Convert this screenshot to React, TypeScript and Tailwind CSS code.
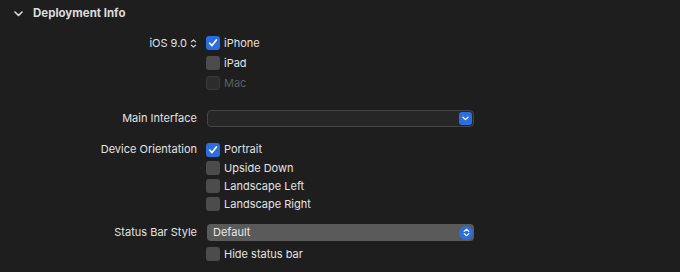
import React from "react";

const font = { fontFamily: "Inter, 'Liberation Sans', sans-serif" };

function Check({ checked, disabled }: { checked?: boolean; disabled?: boolean }) {
  if (checked) {
    return (
      <div className="w-[14px] h-[14px] rounded-[3px] bg-[#2b6ee0] flex items-center justify-center shrink-0">
        <svg width="10" height="10" viewBox="0 0 10 10">
          <path d="M1.8 5.2 L4 7.6 L8.4 1.9" fill="none" stroke="white" strokeWidth="1.7" strokeLinecap="round" strokeLinejoin="round" />
        </svg>
      </div>
    );
  }
  if (disabled) {
    return <div className="w-[14px] h-[14px] rounded-[3px] bg-[#2c2c2c] border border-[#3a3a3a] shrink-0" />;
  }
  return <div className="w-[14px] h-[14px] rounded-[3px] bg-[#4c4c4c] shrink-0" />;
}

function CheckRow({ label, checked, disabled, h }: { label: string; checked?: boolean; disabled?: boolean; h: string }) {
  return (
    <div className={`flex items-center gap-[4px] ${h}`}>
      <Check checked={checked} disabled={disabled} />
      <span className={disabled ? "text-[#5e5e5e]" : "text-[#e2e2e2]"}>{label}</span>
    </div>
  );
}

function Label({ children }: { children: React.ReactNode }) {
  return <div className="w-[197px] text-right text-[#e2e2e2] shrink-0">{children}</div>;
}

export default function App() {
  return (
    <div className="w-[680px] h-[272px] bg-[#1e1e1e] text-[11px] overflow-hidden" style={font}>
      <div className="flex items-center h-[27px] pl-[14px]">
        <svg width="9" height="6" viewBox="0 0 9 6" className="mr-[10px]">
          <path d="M1 1 L4.5 4.5 L8 1" fill="none" stroke="#dcdcdc" strokeWidth="1.6" strokeLinecap="round" strokeLinejoin="round" />
        </svg>
        <span className="font-bold text-[#dcdcdc] text-[11.5px]">Deployment Info</span>
      </div>

      <div className="flex mt-[6px]">
        <Label>
          <span className="inline-flex items-center h-[20px]">
            iOS 9.0
            <svg width="7" height="9" viewBox="0 0 7 9" className="ml-[3px]">
              <path d="M1 3.2 L3.5 1 L6 3.2 M1 5.8 L3.5 8 L6 5.8" fill="none" stroke="#dedede" strokeWidth="1.1" />
            </svg>
          </span>
        </Label>
        <div className="ml-[9px] flex flex-col">
          <CheckRow label="iPhone" checked h="h-[20px]" />
          <CheckRow label="iPad" h="h-[20px]" />
          <CheckRow label="Mac" disabled h="h-[20px]" />
        </div>
      </div>

      <div className="flex items-center mt-[17px] h-[17px]">
        <Label>Main Interface</Label>
        <div className="ml-[10px] w-[267px] h-[17px] rounded-[4px] bg-[#262626] border border-[#454545] flex items-center justify-end pr-[1px]">
          <div className="w-[13px] h-[13px] rounded-[3px] bg-[#2b6ee0] flex items-center justify-center">
            <svg width="7" height="5" viewBox="0 0 7 5">
              <path d="M1 1.2 L3.5 3.6 L6 1.2" fill="none" stroke="white" strokeWidth="1.3" strokeLinecap="round" strokeLinejoin="round" />
            </svg>
          </div>
        </div>
      </div>

      <div className="flex mt-[13px]">
        <div className="h-[19px] flex items-center">
          <Label>Device Orientation</Label>
        </div>
        <div className="ml-[9px] flex flex-col">
          <CheckRow label="Portrait" checked h="h-[19px]" />
          <CheckRow label="Upside Down" h="h-[18px]" />
          <CheckRow label="Landscape Left" h="h-[18px]" />
          <CheckRow label="Landscape Right" h="h-[18px]" />
        </div>
      </div>

      <div className="flex items-center mt-[11px] h-[17px]">
        <Label>Status Bar Style</Label>
        <div className="ml-[10px] w-[267px] h-[17px] rounded-[4px] bg-[#5a5a5a] flex items-center justify-between pl-[6px] pr-[1px]">
          <span className="text-[#e8e8e8]">Default</span>
          <div className="w-[14px] h-[14px] rounded-full bg-[#2b6ee0] flex items-center justify-center">
            <svg width="7" height="9" viewBox="0 0 7 9">
              <path d="M1.2 3.4 L3.5 1.3 L5.8 3.4 M1.2 5.6 L3.5 7.7 L5.8 5.6" fill="none" stroke="white" strokeWidth="1.2" strokeLinecap="round" strokeLinejoin="round" />
            </svg>
          </div>
        </div>
      </div>

      <div className="flex mt-[3px]">
        <div className="w-[197px] shrink-0" />
        <div className="ml-[9px]">
          <CheckRow label="Hide status bar" h="h-[20px]" />
        </div>
      </div>
    </div>
  );
}
